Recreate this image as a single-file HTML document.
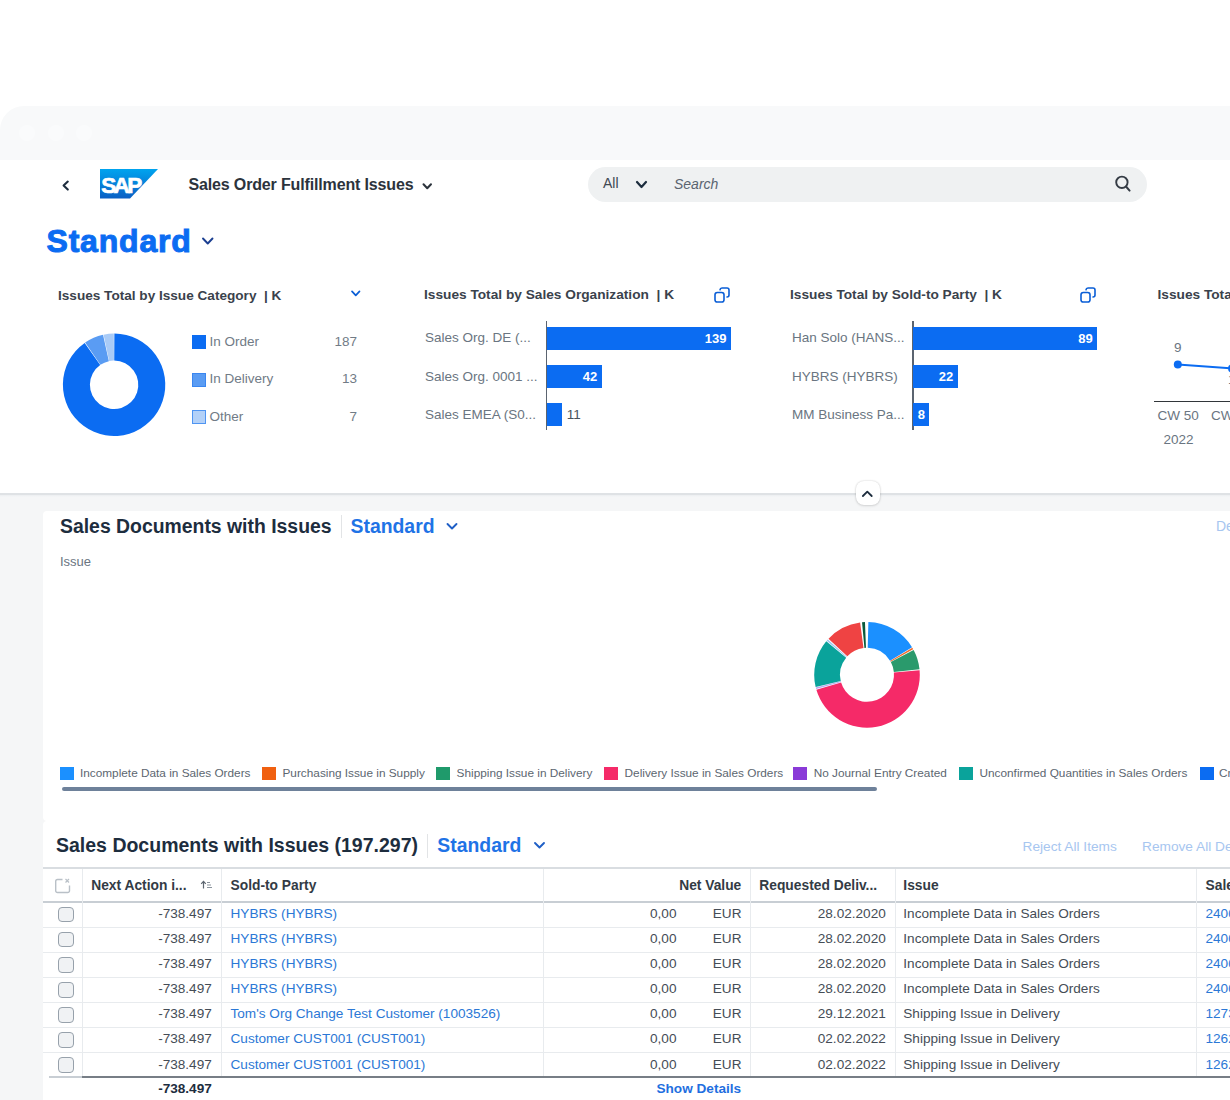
<!DOCTYPE html>
<html><head><meta charset="utf-8">
<style>
*{margin:0;padding:0;box-sizing:border-box}
html,body{width:1230px;height:1100px;overflow:hidden;background:#fff;font-family:"Liberation Sans",sans-serif;color:#1d2d3e;position:relative}
.t{position:absolute;white-space:nowrap;line-height:1}
.r{position:absolute}
</style></head><body>
<div class="r" style="left:0px;top:105.5px;width:1260px;height:54.5px;background:#f8f9fa;border-top-left-radius:24px;"></div>
<div class="r" style="left:19px;top:125px;width:16px;height:16px;background:#fafbfc;border-radius:50%;"></div>
<div class="r" style="left:48px;top:125px;width:16px;height:16px;background:#fafbfc;border-radius:50%;"></div>
<div class="r" style="left:76px;top:125px;width:16px;height:16px;background:#fafbfc;border-radius:50%;"></div>
<svg class="r" style="left:0;top:0" width="1230" height="1100"><path d="M67.8,181.6 L63.6,185.6 L67.8,189.6" fill="none" stroke="#1d2d3e" stroke-width="2.1" stroke-linecap="round" stroke-linejoin="round"/></svg>
<svg class="r" style="left:100px;top:169px" width="59" height="30" viewBox="0 0 59 30">
<defs><linearGradient id="sg" x1="0" y1="0" x2="0" y2="1"><stop offset="0" stop-color="#00a4ef"/><stop offset="1" stop-color="#0a5fc4"/></linearGradient></defs>
<polygon points="0,0 58,0 30,29.5 0,29.5" fill="url(#sg)"/>
<text x="1.2" y="23.6" font-family="Liberation Sans" font-weight="bold" font-size="22.5" fill="#fff" stroke="#fff" stroke-width="0.7" letter-spacing="-2.6">SAP</text>
</svg>
<div class="t" style="left:188.5px;top:176.9px;font-size:16px;font-weight:bold;color:#2c333c;letter-spacing:-0.15px;">Sales Order Fulfillment Issues</div>
<svg class="r" style="left:0;top:0" width="1230" height="1100"><path d="M423.5,184.2 L427.25,188.2 L431,184.2" fill="none" stroke="#2c333c" stroke-width="2.0" stroke-linecap="round" stroke-linejoin="round"/></svg>
<div class="r" style="left:588px;top:166.5px;width:558.5px;height:35.5px;background:#eff1f2;border-radius:18px;"></div>
<div class="t" style="left:603.0px;top:176.4px;font-size:14px;font-weight:normal;color:#3f4852;">All</div>
<svg class="r" style="left:0;top:0" width="1230" height="1100"><path d="M637,182 L641.5,187 L646,182" fill="none" stroke="#1d2d3e" stroke-width="2.2" stroke-linecap="round" stroke-linejoin="round"/></svg>
<div class="t" style="left:674.0px;top:177.1px;font-size:14px;font-weight:normal;color:#5a6470;font-style:italic;">Search</div>
<svg class="r" style="left:0;top:0" width="1230" height="1100"><circle cx="1121.9" cy="182.3" r="5.7" fill="none" stroke="#353c45" stroke-width="1.9"/><path d="M1126,186.5 L1129.6,190.6" stroke="#353c45" stroke-width="2" stroke-linecap="round"/></svg>
<div class="t" style="left:46.5px;top:224.7px;font-size:32px;font-weight:bold;color:#0b6cf2;letter-spacing:0.8px;-webkit-text-stroke:1px #0b6cf2;">Standard</div>
<svg class="r" style="left:0;top:0" width="1230" height="1100"><path d="M203,238.5 L207.75,243.5 L212.5,238.5" fill="none" stroke="#1b3f91" stroke-width="1.9" stroke-linecap="round" stroke-linejoin="round"/></svg>
<div class="t" style="left:58.0px;top:288.5px;font-size:13.6px;font-weight:bold;color:#3a424c;">Issues Total by Issue Category &nbsp;| K</div>
<svg class="r" style="left:0;top:0" width="1230" height="1100"><path d="M352,291.3 L355.75,295.3 L359.5,291.3" fill="none" stroke="#0a5ed6" stroke-width="1.7" stroke-linecap="round" stroke-linejoin="round"/></svg>
<div class="t" style="left:424.0px;top:288.4px;font-size:13.7px;font-weight:bold;color:#3a424c;">Issues Total by Sales Organization &nbsp;| K</div>
<div class="t" style="left:790.0px;top:288.4px;font-size:13.7px;font-weight:bold;color:#3a424c;">Issues Total by Sold-to Party &nbsp;| K</div>
<div class="t" style="left:1157.5px;top:288.4px;font-size:13.7px;font-weight:bold;color:#3a424c;">Issues Total by Time</div>
<svg class="r" style="left:713.5px;top:286.5px" width="18" height="18" viewBox="0 0 18 18"><rect x="1" y="5.5" width="9" height="9.5" rx="2.3" fill="none" stroke="#0a5ed6" stroke-width="1.6"/><path d="M6,2.8 a2,2 0 0 1 2,-1.8 H13 a2,2 0 0 1 2,2 V8 a2,2 0 0 1 -2,2" fill="none" stroke="#0a5ed6" stroke-width="1.6" stroke-linecap="round"/></svg>
<svg class="r" style="left:1079.5px;top:286.5px" width="18" height="18" viewBox="0 0 18 18"><rect x="1" y="5.5" width="9" height="9.5" rx="2.3" fill="none" stroke="#0a5ed6" stroke-width="1.6"/><path d="M6,2.8 a2,2 0 0 1 2,-1.8 H13 a2,2 0 0 1 2,2 V8 a2,2 0 0 1 -2,2" fill="none" stroke="#0a5ed6" stroke-width="1.6" stroke-linecap="round"/></svg>
<svg class="r" style="left:0;top:0" width="1230" height="1100"><path d="M114.37,333.60 A51.2,51.2 0 1 1 84.67,342.90 L100.19,365.00 A24.2,24.2 0 1 0 114.23,360.60 Z" fill="#0b6cf2"/><path d="M85.11,342.60 A51.2,51.2 0 0 1 103.04,334.81 L108.87,361.17 A24.2,24.2 0 0 0 100.40,364.85 Z" fill="#5a9cf3"/><path d="M103.57,334.70 A51.2,51.2 0 0 1 113.83,333.60 L113.97,360.60 A24.2,24.2 0 0 0 109.12,361.12 Z" fill="#a9cbf7"/></svg>
<div class="r" style="left:191.5px;top:335px;width:14.0px;height:14px;background:#0b6cf2;box-sizing:border-box;border:1px solid #0b6cf2;"></div>
<div class="t" style="left:209.5px;top:334.8px;font-size:13.5px;font-weight:normal;color:#717b86;">In Order</div>
<div class="t" style="left:-43.0px;width:400px;text-align:right;top:334.8px;font-size:13.5px;font-weight:normal;color:#717b86;">187</div>
<div class="r" style="left:191.5px;top:372.5px;width:14.0px;height:14.0px;background:#5a9cf3;box-sizing:border-box;border:1px solid #3a86f0;"></div>
<div class="t" style="left:209.5px;top:372.3px;font-size:13.5px;font-weight:normal;color:#717b86;">In Delivery</div>
<div class="t" style="left:-43.0px;width:400px;text-align:right;top:372.3px;font-size:13.5px;font-weight:normal;color:#717b86;">13</div>
<div class="r" style="left:191.5px;top:410px;width:14.0px;height:14px;background:#b3d1f8;box-sizing:border-box;border:1px solid #4f95f2;"></div>
<div class="t" style="left:209.5px;top:409.8px;font-size:13.5px;font-weight:normal;color:#717b86;">Other</div>
<div class="t" style="left:-43.0px;width:400px;text-align:right;top:409.8px;font-size:13.5px;font-weight:normal;color:#717b86;">7</div>
<div class="r" style="left:545.5px;top:321px;width:1.2999999999999545px;height:109px;background:#5b6470;"></div>
<div class="r" style="left:546.5px;top:326.6px;width:184.70000000000005px;height:23.19999999999999px;background:#0b6cf2;"></div>
<div class="t" style="left:425.0px;top:331.4px;font-size:13.5px;font-weight:normal;color:#6a7581;">Sales Org. DE (...</div>
<div class="t" style="left:326.4px;width:400px;text-align:right;top:331.6px;font-size:13px;font-weight:bold;color:#ffffff;">139</div>
<div class="r" style="left:546.5px;top:365px;width:55.5px;height:23.19999999999999px;background:#0b6cf2;"></div>
<div class="t" style="left:425.0px;top:369.8px;font-size:13.5px;font-weight:normal;color:#6a7581;">Sales Org. 0001 ...</div>
<div class="t" style="left:197.2px;width:400px;text-align:right;top:370.0px;font-size:13px;font-weight:bold;color:#ffffff;">42</div>
<div class="r" style="left:546.5px;top:403px;width:15.700000000000045px;height:23.19999999999999px;background:#0b6cf2;"></div>
<div class="t" style="left:425.0px;top:407.8px;font-size:13.5px;font-weight:normal;color:#6a7581;">Sales EMEA (S0...</div>
<div class="t" style="left:566.7px;top:407.6px;font-size:13.5px;font-weight:normal;color:#4a525c;">11</div>
<div class="r" style="left:912.3px;top:321px;width:1.3000000000000682px;height:109px;background:#5b6470;"></div>
<div class="r" style="left:913.3px;top:326.6px;width:183.9000000000001px;height:23.19999999999999px;background:#0b6cf2;"></div>
<div class="t" style="left:792.0px;top:331.4px;font-size:13.5px;font-weight:normal;color:#6a7581;">Han Solo (HANS...</div>
<div class="t" style="left:692.7px;width:400px;text-align:right;top:331.6px;font-size:13px;font-weight:bold;color:#ffffff;">89</div>
<div class="r" style="left:913.3px;top:365px;width:44.5px;height:23.19999999999999px;background:#0b6cf2;"></div>
<div class="t" style="left:792.0px;top:369.8px;font-size:13.5px;font-weight:normal;color:#6a7581;">HYBRS (HYBRS)</div>
<div class="t" style="left:553.3px;width:400px;text-align:right;top:370.0px;font-size:13px;font-weight:bold;color:#ffffff;">22</div>
<div class="r" style="left:913.3px;top:403px;width:16.100000000000023px;height:23.19999999999999px;background:#0b6cf2;"></div>
<div class="t" style="left:792.0px;top:407.8px;font-size:13.5px;font-weight:normal;color:#6a7581;">MM Business Pa...</div>
<div class="t" style="left:524.9px;width:400px;text-align:right;top:408.0px;font-size:13px;font-weight:bold;color:#ffffff;">8</div>
<div class="r" style="left:1154px;top:400.5px;width:106px;height:1.5px;background:#32363a;"></div>
<svg class="r" style="left:0;top:0" width="1230" height="1100"><path d="M1177.8,364.5 L1232,368.5" stroke="#0b6cf2" stroke-width="2"/><circle cx="1177.8" cy="364.5" r="4" fill="#0b6cf2"/><circle cx="1232" cy="368.5" r="4" fill="#0b6cf2"/></svg>
<div class="t" style="left:1174.0px;top:341.4px;font-size:13.5px;font-weight:normal;color:#6a7581;">9</div>
<div class="t" style="left:1228.0px;top:373.1px;font-size:13.5px;font-weight:normal;color:#6a7581;">1</div>
<div class="t" style="left:1157.5px;top:408.6px;font-size:13.5px;font-weight:normal;color:#6a7581;">CW 50</div>
<div class="t" style="left:1211.0px;top:408.6px;font-size:13.5px;font-weight:normal;color:#6a7581;">CW 51</div>
<div class="t" style="left:1163.5px;top:433.1px;font-size:13.5px;font-weight:normal;color:#6a7581;">2022</div>
<div class="r" style="left:0px;top:494px;width:1230px;height:606px;background:#f5f6f7;"></div>
<div class="r" style="left:0px;top:493px;width:1230px;height:1.6000000000000227px;background:#dfe2e5;"></div>
<div class="r" style="left:0px;top:494.6px;width:1230px;height:2.3999999999999773px;background:linear-gradient(#eceef0,#f5f6f7);"></div>
<div class="r" style="left:855.5px;top:481px;width:24.0px;height:24px;background:#ffffff;border-radius:8px;box-shadow:0 0 2px rgba(0,0,0,.18),0 1px 3px rgba(0,0,0,.10);"></div>
<svg class="r" style="left:0;top:0" width="1230" height="1100"><path d="M862.9,496 L867.3,491.6 L871.7,496" fill="none" stroke="#1d2d3e" stroke-width="1.8" stroke-linecap="round" stroke-linejoin="round"/></svg>
<div class="r" style="left:43px;top:511px;width:1257px;height:310px;background:#ffffff;border-radius:4px;"></div>
<div class="t" style="left:60.0px;top:516.9px;font-size:19.4px;font-weight:bold;color:#1d2d3e;">Sales Documents with Issues</div>
<div class="r" style="left:340.5px;top:514.5px;width:1.1999999999999886px;height:23.5px;background:#e2e4e6;"></div>
<div class="t" style="left:350.5px;top:516.9px;font-size:19.4px;font-weight:bold;color:#1f73e6;">Standard</div>
<svg class="r" style="left:0;top:0" width="1230" height="1100"><path d="M447.5,524 L452.0,528.5 L456.5,524" fill="none" stroke="#1f5fc6" stroke-width="1.9" stroke-linecap="round" stroke-linejoin="round"/></svg>
<div class="t" style="left:60.0px;top:555.3px;font-size:13px;font-weight:normal;color:#6a7581;">Issue</div>
<div class="t" style="left:1216.0px;top:519.1px;font-size:14px;font-weight:normal;color:#a7c6f0;">Delete</div>
<svg class="r" style="left:0;top:0" width="1230" height="1100"><path d="M868.38,622.02 A52.8,52.8 0 0 1 912.02,647.21 L890.02,660.69 A27,27 0 0 0 867.71,647.81 Z" fill="#1b90ff"/><path d="M912.35,647.76 A52.8,52.8 0 0 1 913.18,649.20 L890.61,661.71 A27,27 0 0 0 890.19,660.97 Z" fill="#f06c2c"/><path d="M913.62,650.01 A52.8,52.8 0 0 1 919.51,669.28 L893.85,671.98 A27,27 0 0 0 890.84,662.12 Z" fill="#2a9a6c"/><path d="M919.60,670.20 A52.8,52.8 0 0 1 816.37,689.80 L841.11,682.47 A27,27 0 0 0 893.90,672.45 Z" fill="#f52a68"/><path d="M816.17,689.09 A52.8,52.8 0 0 1 815.77,687.57 L840.80,681.33 A27,27 0 0 0 841.01,682.11 Z" fill="#b6a7f0"/><path d="M815.64,687.04 A52.8,52.8 0 0 1 826.26,641.22 L846.17,657.63 A27,27 0 0 0 840.74,681.06 Z" fill="#0aa39b"/><path d="M826.73,640.65 A52.8,52.8 0 0 1 827.76,639.47 L846.94,656.73 A27,27 0 0 0 846.41,657.34 Z" fill="#9fc8f0"/><path d="M828.51,638.66 A52.8,52.8 0 0 1 860.11,622.45 L863.48,648.03 A27,27 0 0 0 847.32,656.32 Z" fill="#ef4343"/><path d="M862.03,622.23 A52.8,52.8 0 0 1 864.97,622.04 L865.96,647.82 A27,27 0 0 0 864.46,647.92 Z" fill="#0a5a3c"/></svg>
<div class="r" style="left:60px;top:766.7px;width:14px;height:13.799999999999955px;background:#1b90ff;"></div>
<div class="t" style="left:80.0px;top:768.3px;font-size:11.8px;font-weight:normal;color:#5c6670;">Incomplete Data in Sales Orders</div>
<div class="r" style="left:262.3px;top:766.7px;width:14.0px;height:13.799999999999955px;background:#f06010;"></div>
<div class="t" style="left:282.5px;top:768.3px;font-size:11.8px;font-weight:normal;color:#5c6670;">Purchasing Issue in Supply</div>
<div class="r" style="left:436.3px;top:766.7px;width:14.0px;height:13.799999999999955px;background:#1f9a6b;"></div>
<div class="t" style="left:456.6px;top:768.3px;font-size:11.8px;font-weight:normal;color:#5c6670;">Shipping Issue in Delivery</div>
<div class="r" style="left:604.2px;top:766.7px;width:14.0px;height:13.799999999999955px;background:#f52a68;"></div>
<div class="t" style="left:624.6px;top:768.3px;font-size:11.8px;font-weight:normal;color:#5c6670;">Delivery Issue in Sales Orders</div>
<div class="r" style="left:793.4px;top:766.7px;width:14.0px;height:13.799999999999955px;background:#8a3ad8;"></div>
<div class="t" style="left:813.7px;top:768.3px;font-size:11.8px;font-weight:normal;color:#5c6670;">No Journal Entry Created</div>
<div class="r" style="left:959.3px;top:766.7px;width:14.0px;height:13.799999999999955px;background:#0aa39b;"></div>
<div class="t" style="left:979.5px;top:768.3px;font-size:11.8px;font-weight:normal;color:#5c6670;">Unconfirmed Quantities in Sales Orders</div>
<div class="r" style="left:1199.5px;top:766.7px;width:14.0px;height:13.799999999999955px;background:#0b6cf2;"></div>
<div class="t" style="left:1219.0px;top:768.3px;font-size:11.8px;font-weight:normal;color:#5c6670;">Credit Block</div>
<div class="r" style="left:61.5px;top:787px;width:815.5px;height:4px;background:#6e819a;border-radius:2px;"></div>
<div class="r" style="left:43px;top:821px;width:1257px;height:319px;background:#ffffff;border-radius:4px;"></div>
<div class="t" style="left:56.0px;top:836.3px;font-size:19.5px;font-weight:bold;color:#1d2d3e;">Sales Documents with Issues (197.297)</div>
<div class="r" style="left:427.3px;top:834px;width:1.1999999999999886px;height:23.5px;background:#e2e4e6;"></div>
<div class="t" style="left:437.3px;top:836.4px;font-size:19.4px;font-weight:bold;color:#1f73e6;">Standard</div>
<svg class="r" style="left:0;top:0" width="1230" height="1100"><path d="M535,843 L539.5,847.5 L544,843" fill="none" stroke="#1f5fc6" stroke-width="1.9" stroke-linecap="round" stroke-linejoin="round"/></svg>
<div class="t" style="left:1022.5px;top:839.7px;font-size:13.7px;font-weight:normal;color:#a7c6f0;">Reject All Items</div>
<div class="t" style="left:1142.0px;top:839.7px;font-size:13.7px;font-weight:normal;color:#a7c6f0;">Remove All Defects</div>
<div class="r" style="left:43px;top:867.2px;width:1187px;height:2.0px;background:#d9dde1;"></div>
<div class="r" style="left:43px;top:900.8px;width:1187px;height:1.8000000000000682px;background:#c8ced4;"></div>
<div class="r" style="left:43px;top:926.8000000000001px;width:1187px;height:1.0px;background:#e8ebee;"></div>
<div class="r" style="left:43px;top:951.9000000000001px;width:1187px;height:1.0px;background:#e8ebee;"></div>
<div class="r" style="left:43px;top:977.0px;width:1187px;height:1.0px;background:#e8ebee;"></div>
<div class="r" style="left:43px;top:1002.1px;width:1187px;height:1.0px;background:#e8ebee;"></div>
<div class="r" style="left:43px;top:1027.2px;width:1187px;height:1.0px;background:#e8ebee;"></div>
<div class="r" style="left:43px;top:1052.3000000000002px;width:1187px;height:1.0px;background:#e8ebee;"></div>
<div class="r" style="left:81.5px;top:869px;width:1.0px;height:208px;background:#e8ebee;"></div>
<div class="r" style="left:221px;top:869px;width:1px;height:208px;background:#e8ebee;"></div>
<div class="r" style="left:543px;top:869px;width:1px;height:208px;background:#e8ebee;"></div>
<div class="r" style="left:749.5px;top:869px;width:1.0px;height:208px;background:#e8ebee;"></div>
<div class="r" style="left:895px;top:869px;width:1px;height:208px;background:#e8ebee;"></div>
<div class="r" style="left:1195.5px;top:869px;width:1.0px;height:208px;background:#e8ebee;"></div>
<div class="r" style="left:49px;top:1076.2px;width:33px;height:1.3999999999998636px;background:#c8ced4;"></div>
<div class="r" style="left:82px;top:1076.2px;width:1148px;height:1.7999999999999545px;background:#777e86;"></div>
<div class="t" style="left:91.2px;top:878.6px;font-size:13.8px;font-weight:bold;color:#333b45;">Next Action i...</div>
<div class="t" style="left:230.5px;top:878.6px;font-size:13.8px;font-weight:bold;color:#333b45;">Sold-to Party</div>
<div class="t" style="left:341.3px;width:400px;text-align:right;top:878.6px;font-size:13.8px;font-weight:bold;color:#333b45;">Net Value</div>
<div class="t" style="left:759.3px;top:878.6px;font-size:13.8px;font-weight:bold;color:#333b45;">Requested Deliv...</div>
<div class="t" style="left:903.3px;top:878.6px;font-size:13.8px;font-weight:bold;color:#333b45;">Issue</div>
<div class="t" style="left:1205.5px;top:878.6px;font-size:13.8px;font-weight:bold;color:#333b45;">Sales Document</div>
<svg class="r" style="left:0;top:0" width="1230" height="1100"><path d="M62.5,879.5 H57.5 a1.8,1.8 0 0 0 -1.8,1.8 V890.7 a1.8,1.8 0 0 0 1.8,1.8 H67.7 a1.8,1.8 0 0 0 1.8,-1.8 V885.5" fill="none" stroke="#b9c0c7" stroke-width="1.4"/><path d="M65.5,879 L69,882.5 M69,879 L65.5,882.5" stroke="#b9c0c7" stroke-width="1.2"/><path d="M203.5,888.5 V881.5 M201.2,883.8 L203.5,881.3 L205.8,883.8" fill="none" stroke="#5d6670" stroke-width="1.2"/><path d="M207,882.5 h3 M207,885 h4 M207,887.5 h5" stroke="#8a939c" stroke-width="1"/></svg>
<div class="r" style="left:58px;top:906.8px;width:16px;height:15.600000000000023px;background:#f0f2f4;box-sizing:border-box;border:1.5px solid #97a1ab;border-radius:4px;"></div>
<div class="t" style="left:-188.2px;width:400px;text-align:right;top:906.9px;font-size:13.6px;font-weight:normal;color:#454d56;">-738.497</div>
<div class="t" style="left:230.5px;top:906.9px;font-size:13.6px;font-weight:normal;color:#2b78d6;">HYBRS (HYBRS)</div>
<div class="t" style="left:276.5px;width:400px;text-align:right;top:906.9px;font-size:13.6px;font-weight:normal;color:#454d56;">0,00</div>
<div class="t" style="left:341.5px;width:400px;text-align:right;top:906.9px;font-size:13.6px;font-weight:normal;color:#454d56;">EUR</div>
<div class="t" style="left:485.8px;width:400px;text-align:right;top:906.9px;font-size:13.6px;font-weight:normal;color:#454d56;">28.02.2020</div>
<div class="t" style="left:903.3px;top:906.9px;font-size:13.6px;font-weight:normal;color:#454d56;">Incomplete Data in Sales Orders</div>
<div class="t" style="left:1205.5px;top:906.9px;font-size:13.6px;font-weight:normal;color:#2b78d6;">24000</div>
<div class="r" style="left:58px;top:931.9px;width:16px;height:15.600000000000023px;background:#f0f2f4;box-sizing:border-box;border:1.5px solid #97a1ab;border-radius:4px;"></div>
<div class="t" style="left:-188.2px;width:400px;text-align:right;top:932.0px;font-size:13.6px;font-weight:normal;color:#454d56;">-738.497</div>
<div class="t" style="left:230.5px;top:932.0px;font-size:13.6px;font-weight:normal;color:#2b78d6;">HYBRS (HYBRS)</div>
<div class="t" style="left:276.5px;width:400px;text-align:right;top:932.0px;font-size:13.6px;font-weight:normal;color:#454d56;">0,00</div>
<div class="t" style="left:341.5px;width:400px;text-align:right;top:932.0px;font-size:13.6px;font-weight:normal;color:#454d56;">EUR</div>
<div class="t" style="left:485.8px;width:400px;text-align:right;top:932.0px;font-size:13.6px;font-weight:normal;color:#454d56;">28.02.2020</div>
<div class="t" style="left:903.3px;top:932.0px;font-size:13.6px;font-weight:normal;color:#454d56;">Incomplete Data in Sales Orders</div>
<div class="t" style="left:1205.5px;top:932.0px;font-size:13.6px;font-weight:normal;color:#2b78d6;">24000</div>
<div class="r" style="left:58px;top:957.0px;width:16px;height:15.600000000000023px;background:#f0f2f4;box-sizing:border-box;border:1.5px solid #97a1ab;border-radius:4px;"></div>
<div class="t" style="left:-188.2px;width:400px;text-align:right;top:957.1px;font-size:13.6px;font-weight:normal;color:#454d56;">-738.497</div>
<div class="t" style="left:230.5px;top:957.1px;font-size:13.6px;font-weight:normal;color:#2b78d6;">HYBRS (HYBRS)</div>
<div class="t" style="left:276.5px;width:400px;text-align:right;top:957.1px;font-size:13.6px;font-weight:normal;color:#454d56;">0,00</div>
<div class="t" style="left:341.5px;width:400px;text-align:right;top:957.1px;font-size:13.6px;font-weight:normal;color:#454d56;">EUR</div>
<div class="t" style="left:485.8px;width:400px;text-align:right;top:957.1px;font-size:13.6px;font-weight:normal;color:#454d56;">28.02.2020</div>
<div class="t" style="left:903.3px;top:957.1px;font-size:13.6px;font-weight:normal;color:#454d56;">Incomplete Data in Sales Orders</div>
<div class="t" style="left:1205.5px;top:957.1px;font-size:13.6px;font-weight:normal;color:#2b78d6;">24000</div>
<div class="r" style="left:58px;top:982.0999999999999px;width:16px;height:15.600000000000023px;background:#f0f2f4;box-sizing:border-box;border:1.5px solid #97a1ab;border-radius:4px;"></div>
<div class="t" style="left:-188.2px;width:400px;text-align:right;top:982.2px;font-size:13.6px;font-weight:normal;color:#454d56;">-738.497</div>
<div class="t" style="left:230.5px;top:982.2px;font-size:13.6px;font-weight:normal;color:#2b78d6;">HYBRS (HYBRS)</div>
<div class="t" style="left:276.5px;width:400px;text-align:right;top:982.2px;font-size:13.6px;font-weight:normal;color:#454d56;">0,00</div>
<div class="t" style="left:341.5px;width:400px;text-align:right;top:982.2px;font-size:13.6px;font-weight:normal;color:#454d56;">EUR</div>
<div class="t" style="left:485.8px;width:400px;text-align:right;top:982.2px;font-size:13.6px;font-weight:normal;color:#454d56;">28.02.2020</div>
<div class="t" style="left:903.3px;top:982.2px;font-size:13.6px;font-weight:normal;color:#454d56;">Incomplete Data in Sales Orders</div>
<div class="t" style="left:1205.5px;top:982.2px;font-size:13.6px;font-weight:normal;color:#2b78d6;">24000</div>
<div class="r" style="left:58px;top:1007.1999999999999px;width:16px;height:15.600000000000023px;background:#f0f2f4;box-sizing:border-box;border:1.5px solid #97a1ab;border-radius:4px;"></div>
<div class="t" style="left:-188.2px;width:400px;text-align:right;top:1007.3px;font-size:13.6px;font-weight:normal;color:#454d56;">-738.497</div>
<div class="t" style="left:230.5px;top:1007.3px;font-size:13.6px;font-weight:normal;color:#2b78d6;">Tom's Org Change Test Customer (1003526)</div>
<div class="t" style="left:276.5px;width:400px;text-align:right;top:1007.3px;font-size:13.6px;font-weight:normal;color:#454d56;">0,00</div>
<div class="t" style="left:341.5px;width:400px;text-align:right;top:1007.3px;font-size:13.6px;font-weight:normal;color:#454d56;">EUR</div>
<div class="t" style="left:485.8px;width:400px;text-align:right;top:1007.3px;font-size:13.6px;font-weight:normal;color:#454d56;">29.12.2021</div>
<div class="t" style="left:903.3px;top:1007.3px;font-size:13.6px;font-weight:normal;color:#454d56;">Shipping Issue in Delivery</div>
<div class="t" style="left:1205.5px;top:1007.3px;font-size:13.6px;font-weight:normal;color:#2b78d6;">12731</div>
<div class="r" style="left:58px;top:1032.3px;width:16px;height:15.599999999999909px;background:#f0f2f4;box-sizing:border-box;border:1.5px solid #97a1ab;border-radius:4px;"></div>
<div class="t" style="left:-188.2px;width:400px;text-align:right;top:1032.4px;font-size:13.6px;font-weight:normal;color:#454d56;">-738.497</div>
<div class="t" style="left:230.5px;top:1032.4px;font-size:13.6px;font-weight:normal;color:#2b78d6;">Customer CUST001 (CUST001)</div>
<div class="t" style="left:276.5px;width:400px;text-align:right;top:1032.4px;font-size:13.6px;font-weight:normal;color:#454d56;">0,00</div>
<div class="t" style="left:341.5px;width:400px;text-align:right;top:1032.4px;font-size:13.6px;font-weight:normal;color:#454d56;">EUR</div>
<div class="t" style="left:485.8px;width:400px;text-align:right;top:1032.4px;font-size:13.6px;font-weight:normal;color:#454d56;">02.02.2022</div>
<div class="t" style="left:903.3px;top:1032.4px;font-size:13.6px;font-weight:normal;color:#454d56;">Shipping Issue in Delivery</div>
<div class="t" style="left:1205.5px;top:1032.4px;font-size:13.6px;font-weight:normal;color:#2b78d6;">12621</div>
<div class="r" style="left:58px;top:1057.4px;width:16px;height:15.599999999999909px;background:#f0f2f4;box-sizing:border-box;border:1.5px solid #97a1ab;border-radius:4px;"></div>
<div class="t" style="left:-188.2px;width:400px;text-align:right;top:1057.5px;font-size:13.6px;font-weight:normal;color:#454d56;">-738.497</div>
<div class="t" style="left:230.5px;top:1057.5px;font-size:13.6px;font-weight:normal;color:#2b78d6;">Customer CUST001 (CUST001)</div>
<div class="t" style="left:276.5px;width:400px;text-align:right;top:1057.5px;font-size:13.6px;font-weight:normal;color:#454d56;">0,00</div>
<div class="t" style="left:341.5px;width:400px;text-align:right;top:1057.5px;font-size:13.6px;font-weight:normal;color:#454d56;">EUR</div>
<div class="t" style="left:485.8px;width:400px;text-align:right;top:1057.5px;font-size:13.6px;font-weight:normal;color:#454d56;">02.02.2022</div>
<div class="t" style="left:903.3px;top:1057.5px;font-size:13.6px;font-weight:normal;color:#454d56;">Shipping Issue in Delivery</div>
<div class="t" style="left:1205.5px;top:1057.5px;font-size:13.6px;font-weight:normal;color:#2b78d6;">12621</div>
<div class="t" style="left:-188.2px;width:400px;text-align:right;top:1082.1px;font-size:13.6px;font-weight:bold;color:#1d2d3e;">-738.497</div>
<div class="t" style="left:656.5px;top:1082.3px;font-size:13.6px;font-weight:bold;color:#1f6fe0;">Show Details</div>
</body></html>
